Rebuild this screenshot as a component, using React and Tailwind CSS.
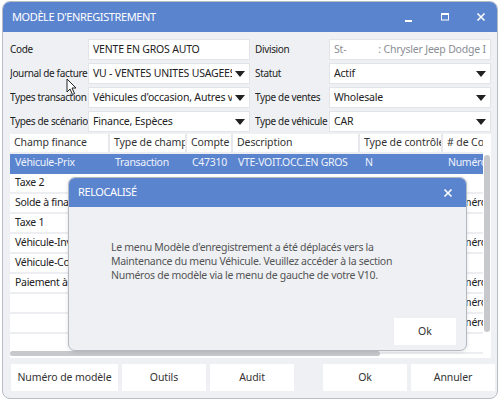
const FONT = "font-['Noto_Sans','Liberation_Sans',sans-serif]";

function Caret() {
  return (
    <svg width="10" height="6" viewBox="0 0 10 6" className="shrink-0">
      <path d="M0 0 L10 0 L5 6 Z" fill="#222" />
    </svg>
  );
}

function Field({ label, value, select, muted, labelW }) {
  return (
    <div className="flex items-center h-[21px]">
      <div className={`${labelW} shrink-0 text-[10px] tracking-[-0.35px] text-[#222] whitespace-nowrap overflow-hidden`}>{label}</div>
      <div className="flex-1 h-full bg-white border border-[#e2e4e8] flex items-center pl-[4px] pr-[4px] gap-[3px] min-w-0">
        <div className={`flex-1 text-[10.5px] tracking-[-0.2px] whitespace-nowrap overflow-hidden ${muted ? "text-[#8a8e95]" : "text-[#222]"}`}>{value}</div>
        {select && <Caret />}
      </div>
    </div>
  );
}

const cols = [
  { name: "Champ finance", w: "w-[100px]" },
  { name: "Type de champ", w: "w-[77px]" },
  { name: "Compte", w: "w-[46px]" },
  { name: "Description", w: "w-[127px]" },
  { name: "Type de contrôle", w: "w-[83px]" },
  { name: "# de Contrôle", w: "w-[60px]" },
];

const rows = [
  ["Véhicule-Prix", "Transaction", "C47310", "VTE-VOIT.OCC.EN GROS", "N", "Numéro de série"],
  ["Taxe 2", "", "", "", "", ""],
  ["Solde à financer", "", "", "", "", "Numéro de série"],
  ["Taxe 1", "", "", "", "", ""],
  ["Véhicule-Inventaire", "", "", "", "", "Numéro de série"],
  ["Véhicule-Coût", "", "", "", "", ""],
  ["Paiement à l'avance", "", "", "", "", "Numéro de série"],
  ["", "", "", "", "", "Numéro de série"],
  ["", "", "", "", "", "Numéro de série"],
  ["", "", "", "", "", ""],
];

function WinButton({ children, w }) {
  return (
    <div className={`${w} h-[27px] bg-white flex items-center justify-center text-[10.5px] tracking-[-0.1px] text-[#333]`}>{children}</div>
  );
}

export default function App() {
  return (
    <div className={`w-[500px] h-[402px] bg-white pt-[1px] pl-[2px] relative overflow-hidden ${FONT}`}>
      {/* fenêtre principale */}
      <div className="w-[496px] h-[398px] rounded-[8px] border border-[#b7bcc5] bg-[#eef0f4] overflow-hidden flex flex-col">
        <div className="h-[30px] bg-[#5b84cf] flex items-center pl-[9px] pr-[10px] shrink-0">
          <div className="flex-1 text-white text-[11px] tracking-[-0.4px]">MODÈLE D'ENREGISTREMENT</div>
          <svg width="10" height="10" viewBox="0 0 10 10" className="mr-[26px] mt-[1px]">
            <rect x="1" y="7" width="7" height="2" fill="#fff" />
          </svg>
          <svg width="10" height="10" viewBox="0 0 10 10" className="mr-[26px]">
            <rect x="1.5" y="1.5" width="7" height="6.5" fill="none" stroke="#fff" strokeWidth="1" />
            <rect x="1" y="1" width="8" height="2" fill="#fff" />
          </svg>
          <svg width="10" height="10" viewBox="0 0 10 10" className="mr-[1px]">
            <path d="M1.5 1.5 L8.5 8.5 M8.5 1.5 L1.5 8.5" stroke="#fff" strokeWidth="1.6" />
          </svg>
        </div>

        {/* formulaire */}
        <div className="grid grid-cols-[240px_236px] gap-x-[5px] gap-y-[3px] pl-[7px] pt-[7px]">
          <Field labelW="w-[78px]" label="Code" value="VENTE EN GROS AUTO" />
          <Field labelW="w-[74px]" label="Division" value={<span>St-<span className="inline-block w-[32px]" />: Chrysler Jeep Dodge Inc.</span>} muted />
          <Field labelW="w-[78px]" label="Journal de facture" value="VU - VENTES UNITES USAGEES" select />
          <Field labelW="w-[74px]" label="Statut" value="Actif" select />
          <Field labelW="w-[78px]" label="Types transaction" value="Véhicules d'occasion, Autres véhicules" select />
          <Field labelW="w-[74px]" label="Type de ventes" value="Wholesale" select />
          <Field labelW="w-[78px]" label="Types de scénario" value="Finance, Espèces" select />
          <Field labelW="w-[74px]" label="Type de véhicule" value="CAR" select />
        </div>

        {/* grille */}
        <div className="ml-[7px] mt-[2px] w-[481px] h-[224px] bg-white relative overflow-hidden shrink-0">
          <div className="flex h-[20px] w-[473px] overflow-hidden border-b-2 border-[#eceef1]">
            {cols.map((c) => (
              <div key={c.name} className={`${c.w} shrink-0 border-r-2 border-[#e6e8ec] pl-[4px] text-[10.5px] tracking-[-0.1px] text-[#333] flex items-center whitespace-nowrap overflow-hidden`}>
                {c.name}
              </div>
            ))}
          </div>
          {rows.map((r, i) => (
            <div key={i} className={`flex h-[20px] w-[473px] overflow-hidden border-b-2 ${i === 0 ? "bg-[#5b84cf] border-[#5b84cf]" : "border-[#eceef1]"}`}>
              {r.map((cell, j) => (
                <div key={j} className={`${cols[j].w} shrink-0 pl-[5px] text-[10.5px] tracking-[-0.3px] flex items-center whitespace-nowrap overflow-hidden ${i === 0 ? "text-[#eef3fc]" : "text-[#222]"}`}>
                  {cell}
                </div>
              ))}
            </div>
          ))}
          {/* barres de défilement */}
          <div className="absolute right-[1px] top-[21px] w-[6px] h-[177px] rounded-[3px] bg-[#c6c8cc]" />
          <div className="absolute left-0 bottom-[2px] w-[370px] h-[5px] rounded-[3px] bg-[#c6c8cc]" />
        </div>

        {/* boutons */}
        <div className="flex ml-[8px] mt-[6px] gap-[4px]">
          <WinButton w="w-[107px]">Numéro de modèle</WinButton>
          <WinButton w="w-[84px]">Outils</WinButton>
          <WinButton w="w-[84px]">Audit</WinButton>
          <div className="w-[21px]" />
          <WinButton w="w-[84px]">Ok</WinButton>
          <WinButton w="w-[84px]">Annuler</WinButton>
        </div>
      </div>

      {/* curseur */}
      <svg width="12" height="18" viewBox="0 0 12 18" className="absolute left-[66px] top-[78px]">
        <path d="M1 1 L1 14 L4 11 L6.5 16.5 L8.5 15.5 L6 10 L10 10 Z" fill="#fff" stroke="#222" strokeWidth="1" strokeLinejoin="round" />
      </svg>

      {/* boîte de dialogue */}
      <div className="absolute left-[68px] top-[177px] w-[399px] h-[174px] rounded-[7px] border border-[#b4b9c2] bg-[#eef0f4] overflow-hidden flex flex-col shadow-[0_1px_4px_rgba(0,0,0,0.12)]">
        <div className="h-[29px] bg-[#5b84cf] flex items-center pl-[9px] pr-[13px] shrink-0">
          <div className="flex-1 text-white text-[11px] tracking-[-0.4px]">RELOCALISÉ</div>
          <svg width="10" height="10" viewBox="0 0 10 10">
            <path d="M1.5 1.5 L8.5 8.5 M8.5 1.5 L1.5 8.5" stroke="#fff" strokeWidth="1.6" />
          </svg>
        </div>
        <div className="pl-[42px] pt-[33px] text-[10.5px] tracking-[-0.28px] leading-[14px] text-[#555]">
          Le menu Modèle d'enregistrement a été déplacés vers la
          <br />
          Maintenance du menu Véhicule. Veuillez accéder à la section
          <br />
          Numéros de modèle via le menu de gauche de votre V10.
        </div>
        <div className="flex justify-end pr-[10px] mt-[36px]">
          <div className="w-[62px] h-[27px] bg-white flex items-center justify-center text-[10.5px] text-[#333]">Ok</div>
        </div>
      </div>
    </div>
  );
}
